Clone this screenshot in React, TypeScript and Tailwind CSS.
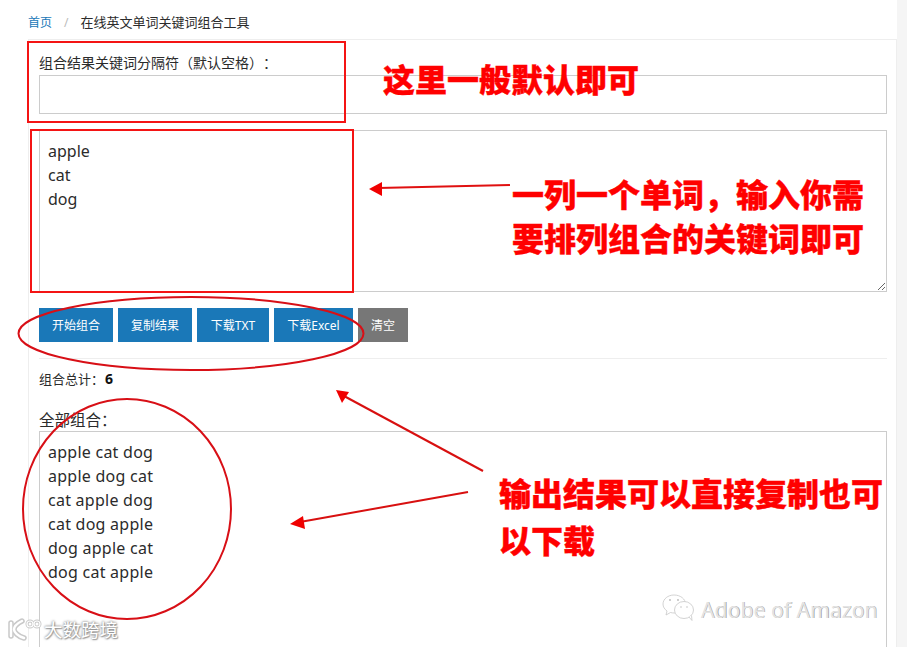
import React from "react";

const buttons = [
  { label: "开始组合", cls: "w-[74px] bg-[#1a78b8]" },
  { label: "复制结果", cls: "w-[74px] bg-[#1a78b8]" },
  { label: "下载TXT", cls: "w-[72px] bg-[#1a78b8]" },
  { label: "下载Excel", cls: "w-[79px] bg-[#1a78b8]" },
  { label: "清空", cls: "w-[50px] bg-[#777777]" },
];

function Overlay() {
  return (
    <svg className="absolute left-0 top-0 pointer-events-none" width="907" height="647" viewBox="0 0 907 647" fill="none">
      <rect x="28" y="42" width="317" height="80" stroke="#f41414" strokeWidth="2" />
      <rect x="31" y="130" width="322" height="162" stroke="#f41414" strokeWidth="2" />
      <ellipse cx="191" cy="333.5" rx="172.5" ry="36.5" stroke="#d80f16" strokeWidth="2" />
      <ellipse cx="127" cy="509" rx="104" ry="110" stroke="#d80f16" strokeWidth="2" />
      <line x1="510" y1="185" x2="378" y2="188" stroke="#e01010" strokeWidth="1.800" />
      <polygon points="369,189 382,182 382,196" fill="#f00000" />
      <line x1="483" y1="471" x2="344" y2="396" stroke="#d81010" strokeWidth="2" />
      <polygon points="336,390 349,392 342,403" fill="#f00000" />
      <line x1="468" y1="492" x2="300" y2="522" stroke="#d81010" strokeWidth="2" />
      <polygon points="290,524 303,516 305,529" fill="#f00000" />
      {/* WeChat mark of the watermark */}
      <g stroke="#c8c8c8" strokeWidth="0.8" fill="#ffffff">
        <path d="M674 595c-6 0-11 4-11 9 0 3 1.500 5 4 7l-1 4 4.500-2.500c1.500 .4 2.500 .5 4 .5 6 0 11-4 11-9s-5-9-11.500-9z" />
        <ellipse cx="684" cy="610" rx="9.500" ry="8.500" />
        <path d="M689 617l3 3.500-.5-5" />
      </g>
      <g fill="#b8b8b8">
        <circle cx="670" cy="600" r="0.900" />
        <circle cx="678" cy="600" r="0.900" />
        <circle cx="681" cy="607" r="0.700" />
        <circle cx="687" cy="607" r="0.700" />
      </g>
      {/* mark of the second watermark */}
      <g fill="none" strokeLinecap="round">
        <g stroke="#c9c9c9" strokeWidth="5.500">
          <path d="M11 623v13" />
          <path d="M22 621c-6 3-8 6-8 8.500s4 7 10 8.500" />
        </g>
        <g stroke="#c9c9c9" strokeWidth="3">
          <circle cx="30" cy="624" r="3" />
          <circle cx="37" cy="624" r="3" />
        </g>
        <g stroke="#ffffff" strokeWidth="2.500">
          <path d="M11 623v13" />
          <path d="M22 621c-6 3-8 6-8 8.500s4 7 10 8.500" />
        </g>
        <g stroke="#ffffff" strokeWidth="1.200">
          <circle cx="30" cy="624" r="3" />
          <circle cx="37" cy="624" r="3" />
        </g>
      </g>
    </svg>
  );
}

export default function App() {
  return (
    <div className="relative flex h-[647px] w-[907px] overflow-hidden bg-white text-[#2b2b2b] font-['Noto_Sans','Noto_Sans_CJK_SC',sans-serif]">
      <div className="w-[897px] shrink-0">
        <div className="flex h-[39px] items-start pl-[28px] pt-[14px] text-[12px] leading-[17px]">
          <a className="text-[#1a78b8]">首页</a>
          <span className="ml-[12px] mr-[12px] text-[#bbb]">/</span>
          <span className="text-[13px]">在线英文单词关键词组合工具</span>
        </div>
        <div className="ml-[28px] h-[608px] border-l border-r border-t border-[#eeeeee] pl-[10px] pr-[9px]">
          <label className="block pt-[13px] text-[14px] leading-[20px] [text-spacing-trim:space-all]">组合结果关键词分隔符（默认空格）：</label>
          <input className="mt-[2px] block h-[39px] w-full border border-[#cccccc] bg-white outline-none" />
          <textarea
            className="mt-[16px] block h-[162px] w-full resize border border-[#cccccc] bg-white p-[8px] text-[16px] leading-[24px] text-[#2b2b2b] outline-none"
            defaultValue={"apple\ncat\ndog"}
          />
          <div className="mt-[16px] flex gap-[5px]">
            {buttons.map((b) => (
              <button key={b.label} className={`${b.cls} h-[34px] pt-[2px] text-center text-[12px] text-white`}>
                {b.label}
              </button>
            ))}
          </div>
          <div className="mt-[16px] border-t border-[#eeeeee] pt-[10px] text-[13px] leading-[20px]">
            组合总计：<b className="ml-[1px] text-[14px] text-[#111]">6</b>
          </div>
          <label className="mt-[20px] block text-[15.500px] leading-[22px]">全部组合：</label>
          <textarea
            className="block h-[300px] w-full border border-[#cccccc] bg-white p-[8px] text-[16px] leading-[24px] tracking-[0.25px] text-[#2b2b2b] outline-none"
            defaultValue={"apple cat dog\napple dog cat\ncat apple dog\ncat dog apple\ndog apple cat\ndog cat apple"}
          />
        </div>
      </div>
      <div className="flex-1 bg-[#f5f5f5]" />

      <Overlay />

      <div className="absolute left-[383px] top-[55px] whitespace-nowrap text-[32px] leading-[46px] text-[#ff0000] font-black font-['Noto_Sans_CJK_SC',sans-serif] [-webkit-text-stroke:0.4px_#ff0000]">
        这里一般默认即可
      </div>
      <div className="absolute left-[512px] top-[171px] w-[360px] text-[32px] leading-[44px] text-[#ff0000] font-black font-['Noto_Sans_CJK_SC',sans-serif] [-webkit-text-stroke:0.4px_#ff0000]">
        一列一个单词，输入你需
        <br />
        要排列组合的关键词即可
      </div>
      <div className="absolute left-[499px] top-[469px] w-[390px] text-[32px] leading-[47px] text-[#ff0000] font-black font-['Noto_Sans_CJK_SC',sans-serif] [-webkit-text-stroke:0.4px_#ff0000]">
        输出结果可以直接复制也可
        <br />
        以下载
      </div>
      <div className="absolute left-[701px] top-[595px] whitespace-nowrap text-[21.200px] leading-[30px] text-[#e4e4e4] [text-shadow:0.6px_0.3px_0_#9a9a9a]">
        Adobe of Amazon
      </div>
      <div className="absolute left-[44px] top-[617px] whitespace-nowrap text-[18.500px] leading-[26px] text-white [text-shadow:0_0_3px_#8a8a8a,0_0_2px_#9a9a9a,1px_1px_1px_#aaaaaa]">
        大数跨境
      </div>
    </div>
  );
}
